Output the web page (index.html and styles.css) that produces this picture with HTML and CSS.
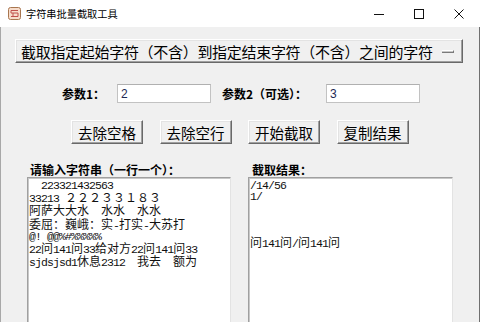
FILE: index.html
```html
<!DOCTYPE html>
<html lang="zh-CN">
<head>
  <meta charset="UTF-8">
  <meta name="viewport" content="width=device-width, initial-scale=1.0">
  <title>字符串批量截取工具</title>
  <link rel="stylesheet" href="styles.css">
</head>
<body>

  <div class="window">
    <div class="titlebar">
      <svg class="appicon" width="13" height="13" viewBox="0 0 13 13">
        <rect x="0.5" y="0.5" width="12" height="12" rx="2" fill="#f7dccb" stroke="#a8764f"/>
        <path d="M3 3.5h7M3 3.5v2.5h7v3.5h-7" fill="none" stroke="#c0504d" stroke-width="1"/>
        <path d="M5 6v3.5" stroke="#c0504d" stroke-width="1"/>
      </svg>
      <span class="title">字符串批量截取工具</span>
      <div class="controls">
        <span class="ctl">
          <svg width="10" height="10" viewBox="0 0 10 10"><path d="M0 5.5h10" stroke="#111" stroke-width="1"/></svg>
        </span>
        <span class="ctl">
          <svg width="10" height="10" viewBox="0 0 10 10"><rect x="0.5" y="0.5" width="9" height="9" fill="none" stroke="#111"/></svg>
        </span>
        <span class="ctl">
          <svg width="10" height="10" viewBox="0 0 10 10"><path d="M0.5 0.5l9 9M9.5 0.5l-9 9" stroke="#111" stroke-width="1"/></svg>
        </span>
      </div>
    </div>

    <div class="client">
      <button class="mode">
        <span>截取指定起始字符（不含）到指定结束字符（不含）之间的字符</span>
        <i class="drop"></i>
      </button>

      <div class="params">
        <span class="lbl p1">参数1：</span>
        <input class="field" value="2">
        <span class="lbl p2">参数2（可选）：</span>
        <input class="field" value="3">
      </div>

      <div class="actions">
        <button class="act">去除空格</button>
        <button class="act">去除空行</button>
        <button class="act">开始截取</button>
        <button class="act">复制结果</button>
      </div>

      <div class="panels">
        <div class="panel">
          <div class="cap">请输入字符串（一行一个）：</div>
          <div class="box">  223321432563
33213 <span class="cj">２２２３３１８３</span>
<span class="cj">阿萨大大水</span>  <span class="cj">水水</span>  <span class="cj">水水</span>
<span class="cj">委屈：巍峨：实</span>-<span class="cj">打实</span>-<span class="cj">大苏打</span>
@! @@%#%%%%%
22<span class="cj">问</span>141<span class="cj">问</span>33<span class="cj">给对方</span>22<span class="cj">问</span>141<span class="cj">问</span>33
sjdsjsd1<span class="cj">休息</span>2312  <span class="cj">我去</span>  <span class="cj">额为</span></div>
        </div>
        <div class="panel">
          <div class="cap right">截取结果：</div>
          <div class="box">/14/56
1/



<span class="cj">问</span>141<span class="cj">问</span>/<span class="cj">问</span>141<span class="cj">问</span></div>
        </div>
      </div>
    </div>
  </div>

</body>
</html>
```

FILE: styles.css
```css
body {
  margin: 0;
  overflow: hidden;
  font-family: "Noto Sans CJK SC", sans-serif;
  color: #000;
  background: #f0f0f0;
}
.window {
  width: 480px;
  height: 322px;
  overflow: hidden;
  display: flex;
  flex-direction: column;
}
.titlebar {
  height: 27px;
  flex: none;
  display: flex;
  align-items: center;
  background: #fff;
}
.appicon {
  margin-left: 8px;
}
.title {
  margin-left: 5px;
  font-size: 10.2px;
  line-height: 27px;
}
.controls {
  margin-left: auto;
  padding-right: 1px;
  display: flex;
}
.ctl {
  width: 40px;
  height: 27px;
  display: flex;
  align-items: center;
  justify-content: center;
}
.client {
  flex: 1;
  background: #f0f0f0;
  border-left: 1px solid #a8a8a8;
  border-right: 1px solid #707070;
}

/* windows classic raised button */
button {
  font-family: "Noto Sans CJK SC", sans-serif;
  color: #000;
  background: #f0f0f0;
  border: 1px solid;
  border-color: #fff #696969 #696969 #fff;
  box-shadow: inset -1px -1px #a0a0a0, inset 1px 1px #e3e3e3;
  padding: 0;
  cursor: pointer;
}
.mode {
  display: flex;
  align-items: center;
  width: 448px;
  height: 24px;
  margin: 12px 0 0 14px;
  padding: 0 5px;
  font-size: 15px;
  letter-spacing: -0.3px;
  text-align: left;
}
.drop {
  margin-left: auto;
  margin-right: 3px;
  width: 11px;
  height: 1px;
  border-top: 1px solid #fff;
  border-bottom: 1px solid #7a7a7a;
  border-right: 1px solid #7a7a7a;
  background: #c8c8c8;
}
.params {
  display: flex;
  align-items: center;
  height: 19px;
  margin-top: 21px;
  padding-left: 61px;
}
.lbl {
  font-size: 12px;
  font-weight: bold;
  white-space: nowrap;
}
.p1 {
  width: 55px;
}
.p2 {
  width: 104px;
  margin-left: 11px;
}
.field {
  box-sizing: border-box;
  width: 94px;
  height: 19px;
  padding: 0 3px;
  border: 1px solid #c2c2c2;
  border-top-color: #b0b0b0;
  background: #fff;
  font-family: "Liberation Sans", sans-serif;
  font-size: 12px;
  color: #1e2a55;
}
.actions {
  display: flex;
  gap: 16.5px;
  margin-top: 17px;
  padding-left: 70px;
}
.act {
  width: 72px;
  height: 24px;
  font-size: 14.5px;
}
.panels {
  display: grid;
  grid-template-columns: 204px 205px;
  column-gap: 17px;
  margin-top: 19px;
  padding-left: 26px;
}
.cap {
  height: 14px;
  line-height: 14px;
  margin-left: 3px;
  font-size: 12px;
  font-weight: bold;
  white-space: nowrap;
}
.cap.right {
  margin-left: 4px;
}
.box {
  box-sizing: border-box;
  height: 160px;
  overflow: hidden;
  padding: 2px 1px;
  background: #fff;
  border: 1px solid;
  border-color: #a0a0a0 #e3e3e3 #e3e3e3 #a0a0a0;
  box-shadow: inset 1px 1px #c8c8c8;
  white-space: pre;
  font-family: "Liberation Mono", "Noto Sans CJK SC", monospace;
  font-size: 11.5px;
  letter-spacing: -0.9px;
  line-height: 11.2px;
  color: #111;
}
.cj {
  font-family: "Noto Sans CJK SC", sans-serif;
  font-size: 12px;
  letter-spacing: 0;
}
```
